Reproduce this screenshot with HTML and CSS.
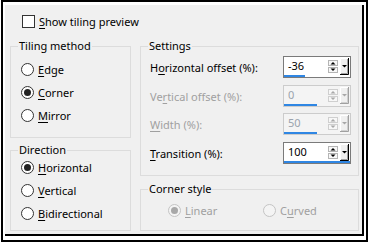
FILE: index.html
```html
<!DOCTYPE html>
<html>
<head>
<meta charset="utf-8">
<link rel="stylesheet" href="styles.css">
</head>
<body>
<div class="frame">
  <div class="panel">
    <div class="check-row"><span class="checkbox"></span><span><u>S</u>how tiling preview</span></div>
    <div class="cols">
      <div class="col col-left">
        <fieldset class="group g-tiling">
          <legend>Tiling method</legend>
          <div class="radio-row"><span class="radio"></span><span><u>E</u>dge</span></div>
          <div class="radio-row"><span class="radio checked"></span><span><u>C</u>orner</span></div>
          <div class="radio-row"><span class="radio"></span><span><u>M</u>irror</span></div>
        </fieldset>
        <fieldset class="group g-dir">
          <legend>Direction</legend>
          <div class="radio-row"><span class="radio checked"></span><span><u>H</u>orizontal</span></div>
          <div class="radio-row"><span class="radio"></span><span><u>V</u>ertical</span></div>
          <div class="radio-row"><span class="radio"></span><span><u>B</u>idirectional</span></div>
        </fieldset>
      </div>
      <div class="col col-right">
        <fieldset class="group g-settings">
          <legend>Settings</legend>
          <div class="set-row">
            <span class="lbl">H<u>o</u>rizontal offset (%):</span>
            <div class="spin">
              <div class="spin-top">
                <span class="val">-36</span>
                <svg class="arrows" width="10" height="13" viewBox="0 0 10 13"><rect x="0.5" y="0.5" width="9" height="5" fill="#f7f7f7" stroke="#b4b4b4"/><polygon points="2.5,4.5 7.5,4.5 5,2" fill="#000"/><rect x="0.5" y="7.5" width="9" height="5" fill="#f7f7f7" stroke="#b4b4b4"/><polygon points="2.5,8.5 7.5,8.5 5,11" fill="#000"/></svg>
                <svg class="drop" width="9" height="17" viewBox="0 0 9 17"><rect x="0" y="0" width="9" height="17" fill="#f0f0f0"/><path d="M0.5 16V0.5H8" stroke="#fff" fill="none"/><path d="M0 16.5H8.5V0" stroke="#000" fill="none"/><path d="M1 15.5H7.5V1" stroke="#a0a0a0" fill="none"/><polygon points="2,7 7,7 4.5,9.5" fill="#000"/></svg>
              </div>
              <div class="track"><div class="bar" style="width:32%"></div></div>
            </div>
          </div>
          <div class="set-row disabled">
            <span class="lbl">Ve<u>r</u>tical offset (%):</span>
            <div class="spin">
              <div class="spin-top">
                <span class="val">0</span>
                <svg class="arrows" width="10" height="13" viewBox="0 0 10 13"><rect x="0.5" y="0.5" width="9" height="5" fill="#f7f7f7" stroke="#cfcfcf"/><polygon points="2.5,4.5 7.5,4.5 5,2" fill="#a8a8a8"/><rect x="0.5" y="7.5" width="9" height="5" fill="#f7f7f7" stroke="#cfcfcf"/><polygon points="2.5,8.5 7.5,8.5 5,11" fill="#a8a8a8"/></svg>
                <svg class="drop" width="9" height="17" viewBox="0 0 9 17"><rect x="0" y="0" width="9" height="17" fill="#f0f0f0"/><path d="M0.5 16V0.5H8" stroke="#fff" fill="none"/><path d="M0 16.5H8.5V0" stroke="#a0a0a0" fill="none"/><path d="M1 15.5H7.5V1" stroke="#d0d0d0" fill="none"/><polygon points="2,7 7,7 4.5,9.5" fill="#a8a8a8"/></svg>
              </div>
              <div class="track"><div class="bar" style="width:50%"></div></div>
            </div>
          </div>
          <div class="set-row disabled tight">
            <span class="lbl"><u>W</u>idth (%):</span>
            <div class="spin">
              <div class="spin-top">
                <span class="val">50</span>
                <svg class="arrows" width="10" height="13" viewBox="0 0 10 13"><rect x="0.5" y="0.5" width="9" height="5" fill="#f7f7f7" stroke="#cfcfcf"/><polygon points="2.5,4.5 7.5,4.5 5,2" fill="#a8a8a8"/><rect x="0.5" y="7.5" width="9" height="5" fill="#f7f7f7" stroke="#cfcfcf"/><polygon points="2.5,8.5 7.5,8.5 5,11" fill="#a8a8a8"/></svg>
                <svg class="drop" width="9" height="17" viewBox="0 0 9 17"><rect x="0" y="0" width="9" height="17" fill="#f0f0f0"/><path d="M0.5 16V0.5H8" stroke="#fff" fill="none"/><path d="M0 16.5H8.5V0" stroke="#a0a0a0" fill="none"/><path d="M1 15.5H7.5V1" stroke="#d0d0d0" fill="none"/><polygon points="2,7 7,7 4.5,9.5" fill="#a8a8a8"/></svg>
              </div>
              <div class="track"><div class="bar" style="width:50%"></div></div>
            </div>
          </div>
          <div class="set-row">
            <span class="lbl"><u>T</u>ransition (%):</span>
            <div class="spin">
              <div class="spin-top">
                <span class="val">100</span>
                <svg class="arrows" width="10" height="13" viewBox="0 0 10 13"><rect x="0.5" y="0.5" width="9" height="5" fill="#f7f7f7" stroke="#b4b4b4"/><polygon points="2.5,4.5 7.5,4.5 5,2" fill="#000"/><rect x="0.5" y="7.5" width="9" height="5" fill="#f7f7f7" stroke="#b4b4b4"/><polygon points="2.5,8.5 7.5,8.5 5,11" fill="#000"/></svg>
                <svg class="drop" width="9" height="17" viewBox="0 0 9 17"><rect x="0" y="0" width="9" height="17" fill="#f0f0f0"/><path d="M0.5 16V0.5H8" stroke="#fff" fill="none"/><path d="M0 16.5H8.5V0" stroke="#000" fill="none"/><path d="M1 15.5H7.5V1" stroke="#a0a0a0" fill="none"/><polygon points="2,7 7,7 4.5,9.5" fill="#000"/></svg>
              </div>
              <div class="track"><div class="bar" style="width:100%"></div></div>
            </div>
          </div>
        </fieldset>
        <fieldset class="group g-corner">
          <legend>Corner style</legend>
          <div class="corner-row">
            <div class="radio-item"><span class="radio checked dis"></span><span class="dis-text"><u>L</u>inear</span></div>
            <div class="radio-item"><span class="radio dis"></span><span class="dis-text">C<u>u</u>rved</span></div>
          </div>
        </fieldset>
      </div>
    </div>
  </div>
</div>
</body>
</html>
```
FILE: styles.css
```css
* { box-sizing: border-box; }

body {
  margin: 0;
  background: #fff;
  font: 11px "Noto Sans", "Open Sans", sans-serif;
  color: #000;
}

u { text-underline-offset: 2px; }

.frame {
  margin-left: 1px;
  width: 367px;
  height: 242px;
  border: 2px solid #000;
  padding: 3px 2px 4px 2px;
}

.panel {
  height: 231px;
  background: #f0f0f0;
  border-right: 2px solid #000;
  border-bottom: 2px solid #000;
  padding: 10px 0 0 5px;
}

.check-row {
  display: flex;
  align-items: center;
  height: 13px;
  margin-left: 12px;
  line-height: 13px;
}

.checkbox {
  width: 13px;
  height: 13px;
  border: 1px solid #333;
  background: #fff;
  margin-right: 4px;
  flex: none;
}

.cols {
  display: flex;
  margin-top: 12px;
}

.col-left { width: 121px; }
.col-right { width: 219px; margin-left: 9px; }

.group {
  margin: 0;
  padding: 0;
  border: 1px solid #dcdcdc;
  min-width: 0;
}

.group legend {
  padding: 0 1px;
  margin-left: 7px;
  line-height: 12px;
}

.g-tiling { padding-top: 6px; padding-bottom: 10px; }
.g-dir { margin-top: 6px; padding-top: 0; padding-bottom: 5px; }
.g-settings { padding: 4px 0 11px 0; }
.g-corner { margin-top: 7px; padding: 4px 0 8px 0; }

.radio-row {
  display: flex;
  align-items: center;
  height: 23px;
  margin-left: 10px;
}

.radio {
  width: 13px;
  height: 13px;
  border-radius: 50%;
  border: 1px solid #333;
  background: #fff;
  margin-right: 4px;
  flex: none;
  display: flex;
  align-items: center;
  justify-content: center;
}

.radio.checked::after {
  content: "";
  width: 7px;
  height: 7px;
  border-radius: 50%;
  background: #222;
}

.radio.dis {
  border-color: #c4c4c4;
  background: #f4f4f4;
}

.radio.dis.checked::after { background: #a8a8a8; }

.dis-text { color: #a0a0a0; }

.set-row {
  display: flex;
  align-items: center;
  justify-content: space-between;
  height: 22px;
  padding: 0 7px 0 9px;
}

.set-row + .set-row { margin-top: 7px; }
.set-row.tight { margin-top: 6px; }

.set-row.disabled .lbl { color: #a0a0a0; }

.spin {
  width: 68px;
  height: 22px;
  border: 1px solid #7a7a7a;
  background: #fff;
  display: flex;
  flex-direction: column;
}

.set-row.disabled .spin {
  border-color: #cccccc;
  background: #f4f4f4;
}

.spin-top {
  display: flex;
  height: 17px;
}

.val {
  flex: 1;
  padding-left: 4px;
  line-height: 18px;
}

.set-row.disabled .val { color: #9aa3ad; }

.arrows {
  margin: 3px 2px 0 0;
  flex: none;
}

.drop {
  margin: 1px 1px 0 0;
  flex: none;
}

.track {
  height: 3px;
  padding-top: 1px;
}

.bar {
  height: 2px;
  background: #2f86e3;
}

.corner-row {
  display: flex;
  align-items: center;
  height: 23px;
  padding-left: 27px;
}

.radio-item {
  display: flex;
  align-items: center;
  width: 100px;
}
```
